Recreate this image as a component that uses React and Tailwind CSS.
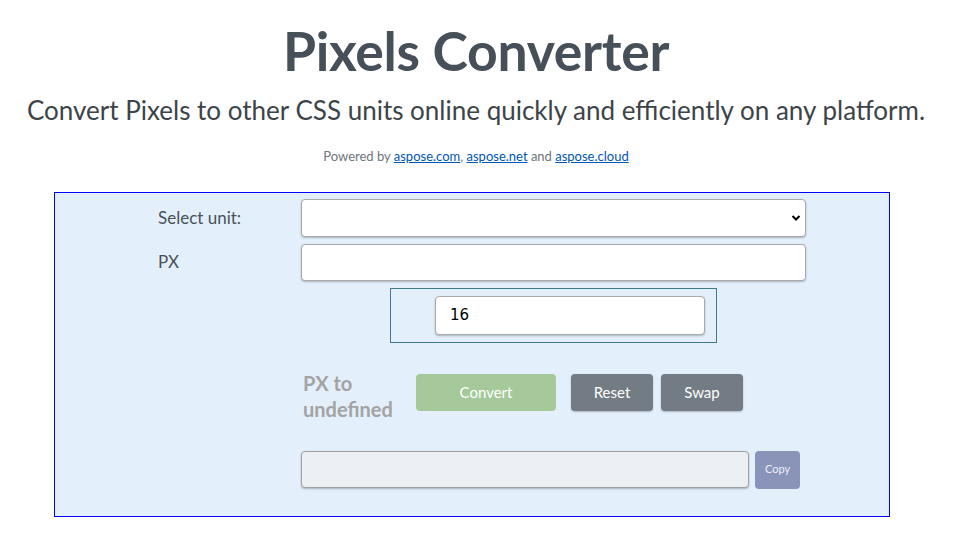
export default function App() {
  const font = { fontFamily: '"Lato", "Noto Sans", sans-serif' };
  return (
    <div className="w-[962px] h-[539px] bg-white overflow-hidden" style={font}>
      <div className="w-[952px]">
        <h1 className="text-center text-[53.5px] font-bold leading-none text-[#474f58] pt-[24px] tracking-[-0.3px]">
          Pixels Converter
        </h1>
        <p className="text-center text-[26px] text-[#3d4449] mt-[16px] leading-[32px]">
          Convert Pixels to other CSS units online quickly and efficiently on any platform.
        </p>
        <p className="text-center text-[13px] text-[#6c757d] mt-[22px] leading-[16px]">
          Powered by <a className="text-[#0056b3] underline" href="#">aspose.com</a>,{" "}
          <a className="text-[#0056b3] underline" href="#">aspose.net</a> and{" "}
          <a className="text-[#0056b3] underline" href="#">aspose.cloud</a>
        </p>
      </div>
      <div className="ml-[54px] mt-[28px] w-[836px] h-[325px] border border-[#0000ff] bg-[#e3f0fc] pt-[6px]">
        <div className="flex items-center h-[38px]">
          <div className="w-[246px] pl-[103px] text-[17px] text-[#495057]">Select unit:</div>
          <div className="w-[505px] h-[38px] bg-white rounded-[4px] border border-[#a9a9a9] shadow-[0_1px_2px_rgba(0,0,0,0.25)] flex items-center justify-end pr-[4px]">
            <svg width="10" height="8" viewBox="0 0 10 8"><path d="M1.5 2 L5 5.5 L8.5 2" stroke="#000" strokeWidth="2" fill="none" /></svg>
          </div>
        </div>
        <div className="flex items-center h-[37px] mt-[7px]">
          <div className="w-[246px] pl-[103px] text-[17px] text-[#495057]">PX</div>
          <div className="w-[505px] h-[37px] bg-white rounded-[4px] border border-[#a9a9a9] shadow-[0_1px_2px_rgba(0,0,0,0.25)]"></div>
        </div>
        <div className="ml-[335px] mt-[7px] w-[327px] h-[55px] border border-[#3e7a8a] pt-[7px] pl-[44px]">
          <div className="w-[270px] h-[39px] bg-white rounded-[4px] border border-[#a9a9a9] shadow-[0_1px_2px_rgba(0,0,0,0.25)] flex items-center pl-[14px] text-black" style={{ fontFamily: '"DejaVu Sans", sans-serif', fontSize: 15 }}>
            16
          </div>
        </div>
        <div className="flex items-start mt-[31px] ml-[248px] h-[37px]">
          <div className="w-[113px] h-[37px] text-[20px] font-bold text-[#a3a3a3] leading-[26px] -mt-[4px]">
            PX to<br />undefined
          </div>
          <button className="w-[140px] h-[37px] bg-[#a5c99a] text-white text-[15px] rounded-[4px]">Convert</button>
          <button className="ml-[15px] w-[82px] h-[37px] bg-[#737b84] text-white text-[15px] rounded-[4px] shadow-[0_1px_2px_rgba(0,0,0,0.25)]">Reset</button>
          <button className="ml-[8px] w-[82px] h-[37px] bg-[#737b84] text-white text-[15px] rounded-[4px] shadow-[0_1px_2px_rgba(0,0,0,0.25)]">Swap</button>
        </div>
        <div className="flex items-center mt-[40px] ml-[246px]">
          <div className="w-[448px] h-[37px] bg-[#eceff3] rounded-[4px] border border-[#a0a0a0] shadow-[0_1px_2px_rgba(0,0,0,0.25)]"></div>
          <button className="ml-[6px] w-[45px] h-[38px] bg-[#8a93b8] text-[#eef0f8] text-[11px] rounded-[4px]">Copy</button>
        </div>
      </div>
    </div>
  );
}
